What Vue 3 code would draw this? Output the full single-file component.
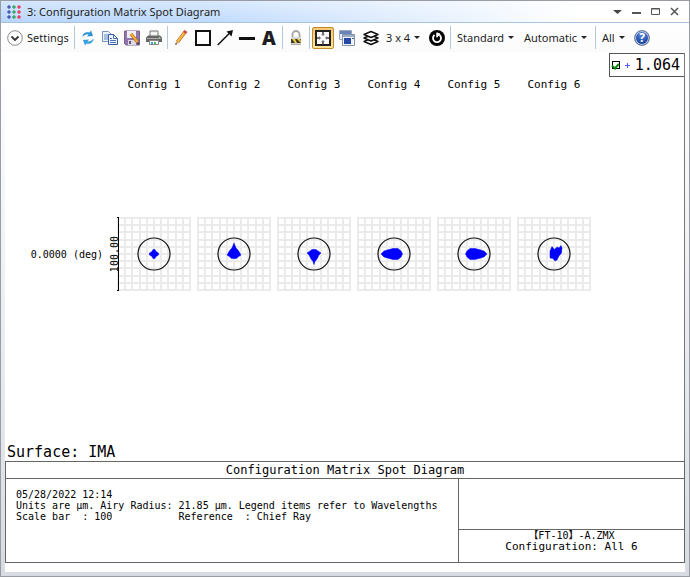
<script setup>
import { ref } from 'vue'

const legendOn = ref(true)
const steps = Array.from({ length: 11 }, (_, i) => 1 + Math.round(i * 7.2))
const configs = [
  { name: 'Config 1', spot: 'M36 32.500h2l1 2 2.500 1.500v2l-2.500 1.500-1 2h-2l-1-2-2.500-1.500v-2l2.500-1.500z' },
  { name: 'Config 2', spot: 'M37 26L39 31 41 33 44 38 41 40 39.500 41.500H34.500L33 40 30 38 33 33 35 31z' },
  { name: 'Config 3', spot: 'M35 32.500H39L41 34 44 36 42 38 40 42 38 44.500 37 47.500 36 44.500 34 42 32 38 30 36 33 34z' },
  { name: 'Config 4', spot: 'M24 37L27 34 32 32.500 36 31.500H41L44 34 45.500 37 44 40 41 42.500H36L32 41.500 27 40z' },
  { name: 'Config 5', spot: 'M50 37L47 34 42 32.500 38 31.500H33L30 34 28.500 37 30 40 33 42.500H38L42 41.500 47 40z' },
  { name: 'Config 6', spot: 'M35 29.500L37.500 32.500 40 30 42 31 44 28.500 45 31 44.500 36 42 39 40 43 38 44 36 41.500 33 41V34z' },
]
</script>

<template>
  <main class="window">
    <header class="titlebar">
      <svg class="logo" width="14" height="14" viewBox="0 0 14 14">
        <g stroke-width="1">
          <g stroke="#4a5bb5" fill="#4a5bb5"><path d="M2 0v14M0 2h4M0 7h4M0 12h4" /><circle cx="2" cy="2" r="1" /><circle cx="2" cy="7" r="1" /><circle cx="2" cy="12" r="1" /></g>
          <g stroke="#38a86b" fill="#38a86b"><path d="M7 0v14M5 2h4M5 7h4M5 12h4" /><circle cx="7" cy="2" r="1" /><circle cx="7" cy="7" r="1" /><circle cx="7" cy="12" r="1" /></g>
          <g stroke="#ed3f61" fill="#ed3f61"><path d="M12 0v14M10 2h4M10 7h4M10 12h4" /><circle cx="12" cy="2" r="1" /><circle cx="12" cy="7" r="1" /><circle cx="12" cy="12" r="1" /></g>
          <path d="M0 4.500h14M0 9.500h14" stroke="#d3e4fa" />
        </g>
      </svg>
      <h1>3: Configuration Matrix Spot Diagram</h1>
      <div class="controls">
        <button aria-label="Window menu"><svg width="9" height="9" viewBox="0 0 9 9"><path d="M0 3h9L4.500 7z" fill="#444" /></svg></button>
        <button aria-label="Minimize"><svg width="9" height="9" viewBox="0 0 9 9"><path d="M0 5h9v2H0z" fill="#555" /></svg></button>
        <button aria-label="Maximize"><svg width="9" height="9" viewBox="0 0 9 9"><path d="M.5 1.500h8v6h-8zM0 2h9" fill="none" stroke="#555" /></svg></button>
        <button aria-label="Close"><svg width="9" height="9" viewBox="0 0 9 9"><path d="M1 1l7 7M8 1L1 8" stroke="#555" stroke-width="1.500" /></svg></button>
      </div>
    </header>

    <nav class="toolbar">
      <button class="settings">
        <svg width="16" height="16" viewBox="0 0 16 16"><circle cx="8" cy="8" r="7.300" fill="#fff" stroke="#8b8b8b" /><path d="M4.500 6.500L8 10l3.500-3.500" fill="none" stroke="#333" stroke-width="1.800" /></svg>
        Settings
      </button>
      <i class="sep"></i>
      <button class="tool" aria-label="Update">
        <svg width="16" height="16" viewBox="0 0 16 16"><path d="M2.500 7C2.500 3 6 1.500 9.500 2.500L11 .5l2 5.500-6 .5L8.500 4.500C6.500 4 4.500 5 2.500 7z" fill="#2b93d6" /><path d="M13.500 8.500c0 4-3.500 6-7 5L5 15.500 3 10l6-.5-1.500 2c2.500.5 4-1 6-3z" fill="#3a9fdf" /></svg>
      </button>
      <button class="tool" aria-label="Copy">
        <svg width="16" height="16" viewBox="0 0 16 16"><path d="M.5 1.500h6l3 3v7h-9z" fill="#e9f1fb" stroke="#7a93c4" /><path d="M2 5h5M2 7h5M2 9h5" stroke="#6789c6" /><path d="M6.500 4.500h5l4 4v6h-9z" fill="#edf4fd" stroke="#355da8" /><path d="M11.500 4.500v4h4M8 8.500h2M8 10.500h6M8 12.500h6" fill="none" stroke="#4a72bd" /></svg>
      </button>
      <button class="tool" aria-label="Save">
        <svg width="16" height="16" viewBox="0 0 16 16"><path d="M.5 1h15v14H2L.5 13.500z" fill="#9275ac" stroke="#78608f" /><path d="M3 1h9v7H3z" fill="#f0eef5" /><path d="M4 10h8v5H4z" fill="#ded8e7" /><path d="M5 11h2v3H5z" fill="#68517d" /><path d="M7 4l6.500 8" stroke="#8a5a26" stroke-width="3" /><path d="M7 4l6.500 8" stroke="#ffad2c" stroke-width="2" /><path d="M12.500 13.500l2.500 1.500-.5-3z" fill="#493629" /></svg>
      </button>
      <button class="tool" aria-label="Print">
        <svg width="16" height="16" viewBox="0 0 16 16"><path d="M4 1h8v6H4z" fill="#f3f3f3" stroke="#777" /><path d="M2 5.500h12l2 2V12H0V7.500z" fill="#666" /><path d="M1 8h14v1H1z" fill="#aaa" /><path d="M3.500 10.500h9v4h-9z" fill="#fff" stroke="#888" /><path d="M5 12h2v2H5z" fill="#39a2d9" /><path d="M8 12h2v2H8z" fill="#51b36a" /><path d="M13 7h1v1h-1z" fill="#7fe57f" /></svg>
      </button>
      <i class="sep"></i>
      <button class="tool" aria-label="Annotate">
        <svg width="16" height="16" viewBox="0 0 16 16"><path d="M4.500 12L12 2" stroke="#9a652a" stroke-width="3.500" /><path d="M4.500 12l7-9.500" stroke="#ffb53e" stroke-width="2.200" /><path d="M11.500 3L13 1" stroke="#cf4a3b" stroke-width="3.500" /><path d="M3 11l-.5 3.500L6 12.800z" fill="#d5a679" /><path d="M2.500 13v2l1.800-1z" fill="#333" /></svg>
      </button>
      <button class="tool" aria-label="Draw rectangle">
        <svg width="16" height="16" viewBox="0 0 16 16"><path d="M1 1h14v14H1z" fill="none" stroke="#111" stroke-width="2" /></svg>
      </button>
      <button class="tool" aria-label="Draw arrow">
        <svg width="16" height="16" viewBox="0 0 16 16"><path d="M.7 15L12 3.700" stroke="#111" stroke-width="1.500" /><path d="M16 0l-1.500 6.500-5-5z" fill="#111" /></svg>
      </button>
      <button class="tool" aria-label="Draw line">
        <svg width="16" height="16" viewBox="0 0 16 16"><path d="M0 7h16v3H0z" fill="#111" /></svg>
      </button>
      <button class="tool letter" aria-label="Add text">A</button>
      <i class="sep"></i>
      <button class="tool" aria-label="Lock">
        <svg width="16" height="16" viewBox="0 0 16 16"><path d="M4.500 8V4.500a3.500 3.500 0 017 0V8" fill="none" stroke="#a5a5a5" stroke-width="1.800" /><path d="M3 7h10v8H3z" fill="#d5d5d5" /><path d="M3 9h10v4H3z" fill="#403b2a" /><path d="M4 9h3l2 4H7zM9 9h3l1 2v2z" fill="#e9c83c" /><path d="M3 14.500h10" stroke="#aaa" /></svg>
      </button>
      <i class="sep"></i>
      <div class="views">
        <button class="tool active" aria-label="Fit window">
          <svg width="16" height="16" viewBox="0 0 16 16"><path d="M1 1h14v14H1z" fill="#fff" stroke="#222" stroke-width="2" /><path d="M8 2v3M8 11v3M2 8h3M11 8h3" stroke="#444" stroke-width="1.500" /><path d="M6 4l2 2 2-2M6 12l2-2 2 2M4 6l2 2-2 2M12 6l-2 2 2 2" fill="#777" /></svg>
        </button>
        <button class="tool" aria-label="Clone window">
          <svg width="16" height="16" viewBox="0 0 16 16"><path d="M.5.5h12v9H.5z" fill="#e9edf5" stroke="#9ba8be" /><path d="M1 1h11v3H1z" fill="#6883b6" /><path d="M3.500 4.500h12v11h-12z" fill="#f0f3f8" stroke="#8492aa" /><path d="M4 5h11v2H4z" fill="#9cacc9" /><path d="M5 8h7v6H5z" fill="#2449a5" /><path d="M13 8h2v1h-2z" fill="#566" /></svg>
        </button>
        <button class="tool" aria-label="Layers">
          <svg width="16" height="16" viewBox="0 0 16 16"><g fill="#fff" stroke="#111" stroke-width="1.400" stroke-linejoin="round"><path d="M8 8.500l7 3-7 3-7-3z" /><path d="M8 5l7 3-7 3-7-3z" /><path d="M8 1.500l7 3-7 3-7-3z" /></g></svg>
        </button>
      </div>
      <button class="drop size">3 x 4<b></b></button>
      <button class="tool" aria-label="Reset">
        <svg width="16" height="16" viewBox="0 0 16 16"><circle cx="8" cy="8" r="8" fill="#050505" /><path d="M10.500 5a4 4 0 11-5 0" fill="none" stroke="#fff" stroke-width="1.800" /><path d="M8 2.500v5M8 3l3 1-3 3z" stroke="#fff" fill="#fff" /></svg>
      </button>
      <i class="sep"></i>
      <button class="drop">Standard<b></b></button>
      <button class="drop auto">Automatic<b></b></button>
      <i class="sep"></i>
      <button class="drop all">All<b></b></button>
      <button class="tool help" aria-label="Help">?</button>
    </nav>

    <section class="sheet">
      <div class="plot">
        <label class="legend">
          <input v-model="legendOn" type="checkbox" aria-label="1.064">
          <svg width="5" height="5" viewBox="0 0 5 5"><path d="M0 2.500h5M2.500 0v5" stroke="#55f" /></svg>
          <span>1.064</span>
        </label>
        <span></span>
        <span v-for="c in configs" :key="c.name" class="name">{{ c.name }}</span>
        <span class="field">0.0000 (deg)</span>
        <div v-for="(c, i) in configs" :key="c.spot" class="cell">
          <svg width="74" height="74" viewBox="0 0 74 74">
            <g stroke="#ebebeb" stroke-width="2" shape-rendering="crispEdges">
              <path v-for="s in steps" :key="s" :d="`M${s} 0V74M0 ${s}H74`" />
            </g>
            <circle cx="37" cy="37" r="16" fill="none" stroke="#111" stroke-width="1.200" />
            <path :d="c.spot" fill="#00f" stroke="#00f" stroke-width=".5" stroke-linejoin="round" />
            <path v-if="i === 0" d="M0 .5h2M1.500 0v74M0 73.500h2" stroke="#000" />
          </svg>
          <span v-if="i === 0" class="scale">100.00</span>
        </div>
      </div>

      <p class="surface">Surface: IMA</p>
      <footer class="info">
        <h2>Configuration Matrix Spot Diagram</h2>
        <pre class="notes">05/28/2022 12:14
Units are µm. Airy Radius: 21.85 µm. Legend items refer to Wavelengths
Scale bar  : 100           Reference  : Chief Ray</pre>
        <div class="side">
          <div class="blank"></div>
          <div class="file"><span>【FT-10】-A.ZMX</span><span class="conf">Configuration: All 6</span></div>
        </div>
      </footer>
    </section>
  </main>
</template>

<style>
body { margin: 0; }
</style>

<style scoped>
* { box-sizing: border-box; }
.window {
  min-height: 100vh;
  display: flex;
  flex-direction: column;
  border: 1px solid #999ca3;
  background: linear-gradient(#fff 50px, #d8dce2);
  font: 11px/16px "Noto Sans", "Open Sans", sans-serif;
  color: #1e1e1e;
}
button {
  padding: 0;
  border: 0;
  background: none;
  font: inherit;
  color: inherit;
  display: flex;
  align-items: center;
  justify-content: center;
}
svg { display: block; flex: none; }
h1, h2, p, pre { margin: 0; font-weight: 400; }

.titlebar {
  height: 22px;
  display: flex;
  align-items: center;
  padding: 0 10px 0 6px;
  gap: 6px;
  border-bottom: 1px solid #a5c3de;
  background:
    linear-gradient(rgba(255, 255, 255, .4), rgba(255, 255, 255, 0)),
    linear-gradient(to right, #b9d6fc 0, #bfdafd 30%, #fff 84%);
}
h1 { font-size: 11px; line-height: 16px; white-space: nowrap; }
.controls { display: flex; gap: 10px; margin-left: auto; }

.toolbar {
  height: 29px;
  display: flex;
  align-items: center;
  padding-left: 6px;
  background: linear-gradient(#fff, #fbfbfc);
  white-space: nowrap;
}
.settings { width: 65px; gap: 4px; justify-content: flex-start; }
.sep { width: 1px; height: 23px; margin: 0 2px; flex: none; background: #b4c9dc; }
.tool { width: 22px; height: 22px; flex: none; }
.letter { font: 900 19px/20px "Open Sans", sans-serif; }
.views { display: flex; gap: 2px; }
.active { border: 1px solid #c18a28; border-radius: 2px; background: linear-gradient(#f6c878, #ffe49a); }
.drop { width: 64px; gap: 4px; padding-left: 4px; justify-content: flex-start; }
.drop b { border: 3px solid transparent; border-top-color: #222; border-bottom: 0; }
.size { width: 44px; }
.auto { width: 76px; padding-left: 7px; }
.all { width: 33px; }
.help {
  width: 16px;
  height: 16px;
  margin-left: 3px;
  border: 1px solid #71819e;
  border-radius: 50%;
  background: radial-gradient(circle at 50% 30%, #5c8be0, #173f9d 70%);
  box-shadow: inset 0 0 0 1px #c2cee3;
  color: #fff;
  font-size: 12px;
  font-weight: 700;
}

.sheet {
  flex: 1;
  display: flex;
  flex-direction: column;
  margin: 1px 4px 4px;
  padding-bottom: 9px;
  background: #fff;
  color: #000;
  font: 11px/13px "DejaVu Sans Mono", monospace;
}
.plot {
  position: relative;
  flex: 1;
  display: grid;
  grid-template-columns: 109px repeat(6, 80px);
  grid-template-rows: 13px 1fr;
  padding: 25px 0 27px;
  border-right: 1px solid #777;
}
.name { text-align: center; }
.field { align-self: center; justify-self: end; font-size: 10px; padding-right: 11px; }
.cell { position: relative; display: flex; align-items: center; justify-content: center; }
.scale {
  position: absolute;
  left: -5px;
  writing-mode: vertical-rl;
  transform: rotate(180deg);
  font-size: 10px;
  line-height: 12px;
}
.legend {
  position: absolute;
  top: 0;
  right: 0;
  height: 24px;
  display: flex;
  align-items: center;
  gap: 5px;
  padding: 0 4px 0 2px;
  border: 1px solid #555;
  border-right: 0;
  font-size: 15px;
  line-height: 22px;
}
.legend input {
  appearance: none;
  display: grid;
  place-items: center;
  width: 8px;
  height: 8px;
  margin: 0;
  border: 1px solid #000;
  background: #fff;
}
.legend input:checked::before {
  content: "";
  width: 3px;
  height: 5px;
  border: solid #0a8a0a;
  border-width: 0 2px 2px 0;
  transform: rotate(40deg);
}
.surface { padding-left: 2px; font-size: 15px; line-height: 17px; border-right: 1px solid #777; }
.info {
  display: grid;
  grid-template-columns: 2fr 1fr;
  border: 1px solid #666;
}
h2 {
  grid-column: 1 / 3;
  text-align: center;
  font-size: 12px;
  line-height: 16px;
  border-bottom: 1px solid #666;
}
.notes { padding: 10px 0 0 10px; font: 10px/11px "DejaVu Sans Mono", monospace; min-height: 83px; }
.side { border-left: 1px solid #666; display: flex; flex-direction: column; }
.blank { flex: 1; border-bottom: 1px solid #666; }
.file {
  display: flex;
  flex-direction: column;
  align-items: center;
  padding-bottom: 10px;
  font: 10px/11px "DejaVu Sans Mono", "Noto Sans CJK SC", monospace;
}
.conf { font-size: 11px; }
</style>
